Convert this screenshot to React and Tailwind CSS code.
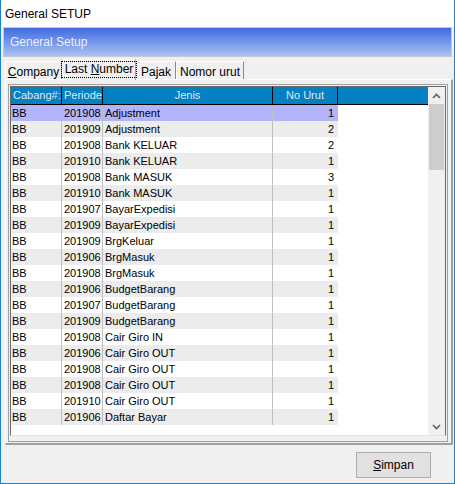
import React from "react";

const rows = [
  ["BB", "201908", "Adjustment", 1],
  ["BB", "201909", "Adjustment", 2],
  ["BB", "201908", "Bank KELUAR", 2],
  ["BB", "201910", "Bank KELUAR", 1],
  ["BB", "201908", "Bank MASUK", 3],
  ["BB", "201910", "Bank MASUK", 1],
  ["BB", "201907", "BayarExpedisi", 1],
  ["BB", "201909", "BayarExpedisi", 1],
  ["BB", "201909", "BrgKeluar", 1],
  ["BB", "201906", "BrgMasuk", 1],
  ["BB", "201908", "BrgMasuk", 1],
  ["BB", "201906", "BudgetBarang", 1],
  ["BB", "201907", "BudgetBarang", 1],
  ["BB", "201909", "BudgetBarang", 1],
  ["BB", "201908", "Cair Giro IN", 1],
  ["BB", "201906", "Cair Giro OUT", 1],
  ["BB", "201908", "Cair Giro OUT", 1],
  ["BB", "201908", "Cair Giro OUT", 1],
  ["BB", "201910", "Cair Giro OUT", 1],
  ["BB", "201906", "Daftar Bayar", 1],
];

const Chevron = ({ down }) => (
  <svg width="9" height="6" viewBox="0 0 9 6">
    <polyline
      points={down ? "1,1 4.5,4.5 8,1" : "1,5 4.5,1.5 8,5"}
      fill="none"
      stroke="#606060"
      strokeWidth="1.6"
    />
  </svg>
);

const Tab = ({ children, width, active }) =>
  active ? (
    <div
      className={`${width} h-[21px] -mb-px z-10 bg-[#f0f0f0] border-t border-l border-white border-r border-r-[#a0a0a0] flex items-start justify-center pt-px whitespace-nowrap`}
    >
      <div className="border border-dotted border-black px-[3px] h-[17px] leading-[15px] text-[12px]">
        {children}
      </div>
    </div>
  ) : (
    <div
      className={`${width} h-[18px] bg-[#f0f0f0] border-t border-l border-white border-r border-r-[#8a8a8a] flex items-center justify-center text-[12px] pt-[2px] whitespace-nowrap`}
    >
      {children}
    </div>
  );

export default function App() {
  return (
    <div className="w-[455px] h-[484px] flex flex-col bg-[#f0f0f0] border-x border-b border-[#1883d7] font-['Liberation_Sans',Arial,sans-serif] text-[11px] text-black overflow-hidden">
      {/* title bar */}
      <div className="h-[27px] bg-white flex items-center pl-[4px] text-[12px] shrink-0">
        General SETUP
      </div>

      {/* header panel */}
      <div className="ml-[2px] mr-[2px] h-[30px] border border-[#c8c8c8] shrink-0">
        <div className="h-full bg-gradient-to-b from-[#4169e0] to-[#a9c1f2] flex items-center pl-[6px] text-[12px] text-[#eef0ff]">
          General Setup
        </div>
      </div>

      {/* tabs */}
      <div className="h-[21px] mt-px flex items-end pl-[4px] shrink-0">
        <Tab width="w-[57px]">
          <u>C</u>ompany
        </Tab>
        <Tab width="w-[74px]" active>
          Last <u>N</u>umber
        </Tab>
        <Tab width="w-[40px]">Pajak</Tab>
        <Tab width="w-[68px]">Nomor urut</Tab>
      </div>

      {/* tab page */}
      <div className="ml-[4px] mr-[1px] h-[366px] border-t border-l border-white border-r-2 border-r-[#a0a0a0] border-b-2 border-b-[#a0a0a0] pt-[4px] pl-[2px] pr-[2px] shrink-0">
        <div className="w-[440px] h-[358px] border border-[#a0a0a0] p-px pb-[5px]">
          <div className="h-[350px] border border-[#696969] border-b-[#e3e3e3] bg-white flex">
            {/* grid body */}
            <div className="flex-1 flex flex-col">
              <div className="h-[18px] flex bg-[#0580c2] text-[#dfe9f5] text-[11px] border-b border-black whitespace-nowrap">
                <div className="w-[51px] pl-[2px] border-r border-black leading-[17px] overflow-hidden">Cabang#:</div>
                <div className="w-[41px] pl-[2px] border-r border-black leading-[17px] overflow-hidden">Periode</div>
                <div className="w-[170px] text-center border-r border-black leading-[17px]">Jenis</div>
                <div className="w-[65px] text-center border-r border-black leading-[17px]">No Urut</div>
              </div>
              {rows.map((r, i) => (
                <div
                  key={i}
                  className={`h-[16px] w-[327px] flex text-[11px] leading-[16px] whitespace-nowrap ${
                    i === 0 ? "bg-[#b4b4fb]" : i % 2 === 1 ? "bg-[#ececec]" : "bg-white"
                  }`}
                >
                  <div className="w-[51px] pl-[1px] border-r border-[#c0c0c0] overflow-hidden">{r[0]}</div>
                  <div className="w-[41px] pl-[2px] border-r border-[#c0c0c0] overflow-hidden">{r[1]}</div>
                  <div className="w-[170px] pl-[2px] border-r border-[#c0c0c0] overflow-hidden">{r[2]}</div>
                  <div className="w-[65px] pr-[4px] text-right">{r[3]}</div>
                </div>
              ))}
            </div>
            {/* scrollbar */}
            <div className="w-[17px] bg-[#f0f0f0] flex flex-col">
              <div className="h-[17px] flex items-center justify-center">
                <Chevron />
              </div>
              <div className="h-[66px] mx-px bg-[#cdcdcd]" />
              <div className="flex-1" />
              <div className="h-[17px] flex items-center justify-center">
                <Chevron down />
              </div>
            </div>
          </div>
        </div>
      </div>

      {/* footer */}
      <div className="flex-1 flex justify-end items-start pt-[7px] pr-[23px]">
        <button className="w-[75px] h-[26px] bg-[#e1e1e1] border border-[#adadad] text-[12px] text-black">
          <u>S</u>impan
        </button>
      </div>
    </div>
  );
}
